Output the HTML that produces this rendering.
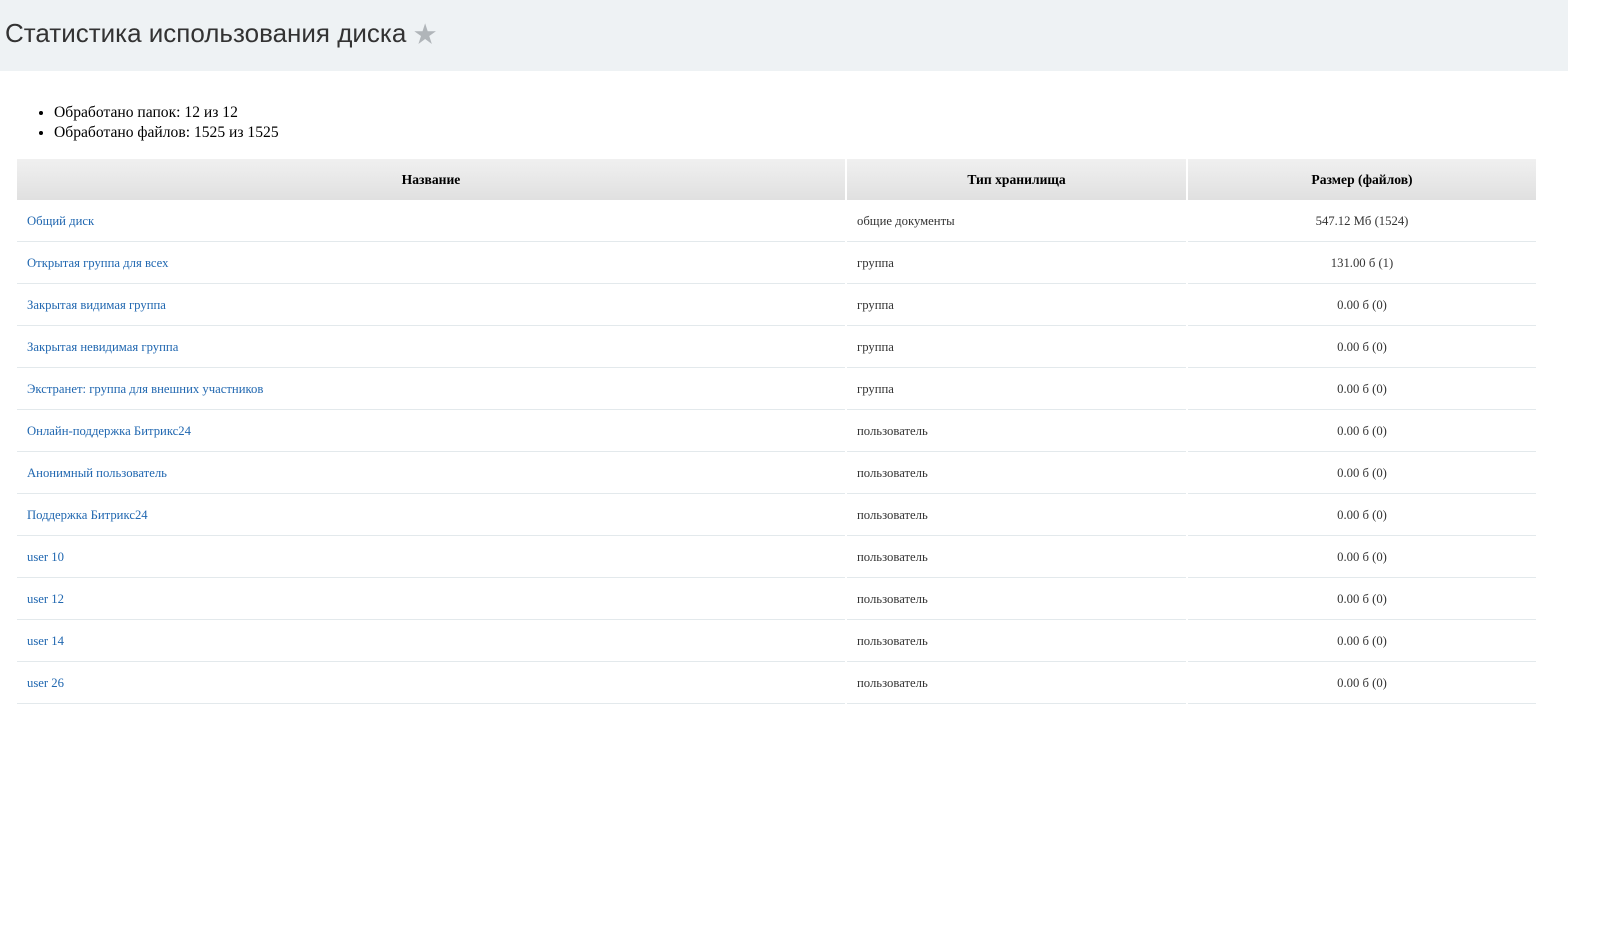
<!DOCTYPE html>
<html><head><meta charset="utf-8"><style>
*{margin:0;padding:0;box-sizing:border-box}
body{width:1598px;height:930px;background:#fff;position:relative;font-family:"Liberation Serif","Noto Serif CJK SC",serif;overflow:hidden}
.hdr{position:absolute;left:0;top:0;width:1568px;height:71px;background:#eef2f4}
.title{position:absolute;left:5px;top:15px;font-family:"Liberation Sans","Noto Sans CJK SC",sans-serif;font-size:26px;color:#333;white-space:nowrap;letter-spacing:0}
.title .star{color:#b0b5b9;font-size:23px}
ul{position:absolute;left:54px;top:103px;font-size:15.6px;line-height:20px;color:#000}
li{list-style:disc}
table{position:absolute;left:15px;top:159px;border-collapse:separate;border-spacing:2px 0;font-size:12.7px}
th{height:41px;background:linear-gradient(#f0f0f0,#e0e0e0);font-size:13.6px;font-weight:bold;color:#000;text-align:center}
td{height:42px;border-bottom:1px solid #e3e9ec;padding:1px 0 0 10px;color:#333;vertical-align:middle}
td a{color:#2067b0;text-decoration:none}
td.c{text-align:center;padding-left:0}
</style></head><body>
<div class="hdr"></div>
<div class="title">Статистика использования диска <span class="star">★</span></div>
<ul><li>Обработано папок: 12 из 12</li><li>Обработано файлов: 1525 из 1525</li></ul>
<table>
<tr><th style="width:828px">Название</th><th style="width:339px">Тип хранилища</th><th style="width:348px">Размер (файлов)</th></tr>
<tr><td><a>Общий диск</a></td><td>общие документы</td><td class="c">547.12 Мб (1524)</td></tr>
<tr><td><a>Открытая группа для всех</a></td><td>группа</td><td class="c">131.00 б (1)</td></tr>
<tr><td><a>Закрытая видимая группа</a></td><td>группа</td><td class="c">0.00 б (0)</td></tr>
<tr><td><a>Закрытая невидимая группа</a></td><td>группа</td><td class="c">0.00 б (0)</td></tr>
<tr><td><a>Экстранет: группа для внешних участников</a></td><td>группа</td><td class="c">0.00 б (0)</td></tr>
<tr><td><a>Онлайн-поддержка Битрикс24</a></td><td>пользователь</td><td class="c">0.00 б (0)</td></tr>
<tr><td><a>Анонимный пользователь</a></td><td>пользователь</td><td class="c">0.00 б (0)</td></tr>
<tr><td><a>Поддержка Битрикс24</a></td><td>пользователь</td><td class="c">0.00 б (0)</td></tr>
<tr><td><a>user 10</a></td><td>пользователь</td><td class="c">0.00 б (0)</td></tr>
<tr><td><a>user 12</a></td><td>пользователь</td><td class="c">0.00 б (0)</td></tr>
<tr><td><a>user 14</a></td><td>пользователь</td><td class="c">0.00 б (0)</td></tr>
<tr><td><a>user 26</a></td><td>пользователь</td><td class="c">0.00 б (0)</td></tr>
</table>
</body></html>
